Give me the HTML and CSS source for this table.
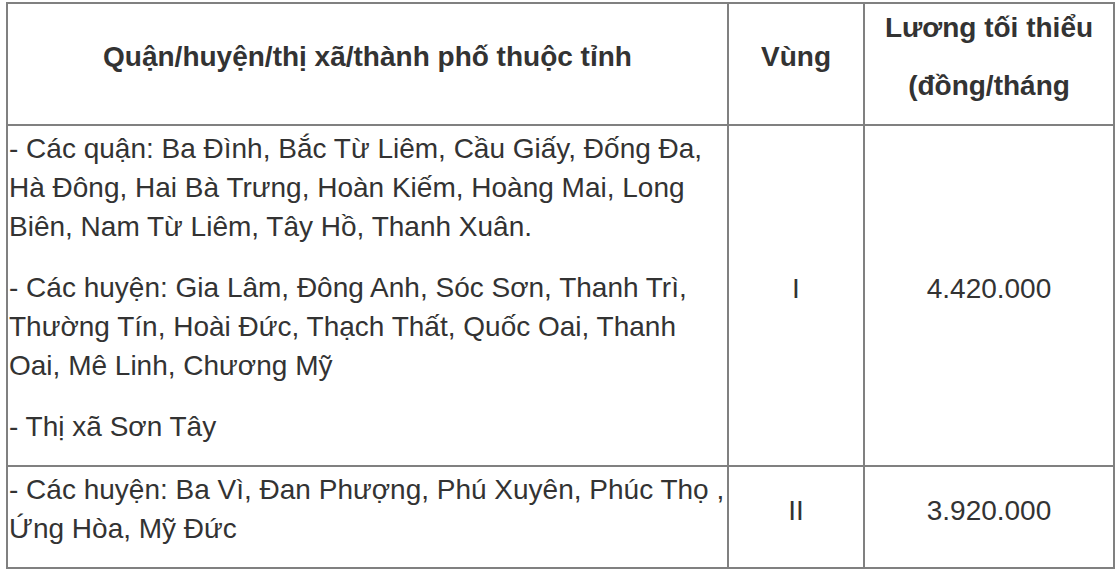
FILE: index.html
```html
<!DOCTYPE html>
<html lang="vi">
<head>
<meta charset="utf-8">
<link rel="stylesheet" href="styles.css">
</head>
<body>
<table class="wage">
  <colgroup>
    <col class="c-area">
    <col class="c-zone">
    <col class="c-wage">
  </colgroup>
  <thead>
    <tr>
      <th class="h-area"><p>Quận/huyện/thị xã/thành phố thuộc tỉnh</p></th>
      <th class="h-zone"><p>Vùng</p></th>
      <th class="h-wage"><p>Lương tối thiểu</p><p>(đồng/tháng</p></th>
    </tr>
  </thead>
  <tbody>
    <tr>
      <td class="area">
        <p>- Các quận: Ba Đình, Bắc Từ Liêm, Cầu Giấy, Đống Đa, Hà Đông, Hai Bà Trưng, Hoàn Kiếm, Hoàng Mai, Long Biên, Nam Từ Liêm, Tây Hồ, Thanh Xuân.</p>
        <p>- Các huyện: Gia Lâm, Đông Anh, Sóc Sơn, Thanh Trì, Thường Tín, Hoài Đức, Thạch Thất, Quốc Oai, Thanh Oai, Mê Linh, Chương Mỹ</p>
        <p>- Thị xã Sơn Tây</p>
      </td>
      <td class="center"><p>I</p></td>
      <td class="center"><p>4.420.000</p></td>
    </tr>
    <tr>
      <td class="area">
        <p>- Các huyện: Ba Vì, Đan Phượng, Phú Xuyên, Phúc Thọ , Ứng Hòa, Mỹ Đức</p>
      </td>
      <td class="center"><p>II</p></td>
      <td class="center"><p>3.920.000</p></td>
    </tr>
  </tbody>
</table>
</body>
</html>
```

FILE: styles.css
```css
html, body {
  margin: 0;
  padding: 0;
  background: #ffffff;
}

body {
  padding: 2px 0 0 6px;
  font-family: "Liberation Sans", Arial, Helvetica, sans-serif;
  color: #333333;
  font-size: 28px;
}

.wage {
  border-collapse: collapse;
  width: 1107px;
  table-layout: fixed;
}

.c-area { width: 721px; }
.c-zone { width: 136px; }
.c-wage { width: 250px; }

.wage th,
.wage td {
  border: 2px solid #808080;
  padding: 0 1px;
  vertical-align: middle;
  line-height: 39px;
}

.wage th {
  font-weight: bold;
  text-align: center;
  padding-top: 4px;
  padding-bottom: 0;
}

.wage th p {
  margin: 0 0 19px 0;
}

.wage td.area {
  text-align: left;
  padding-top: 3px;
}

.wage td p {
  margin: 0 0 22px 0;
}

.wage td.area p:last-child {
  margin-bottom: 19px;
}

.center {
  text-align: center;
}

.wage td.center p {
  margin-bottom: 14px;
}
```
